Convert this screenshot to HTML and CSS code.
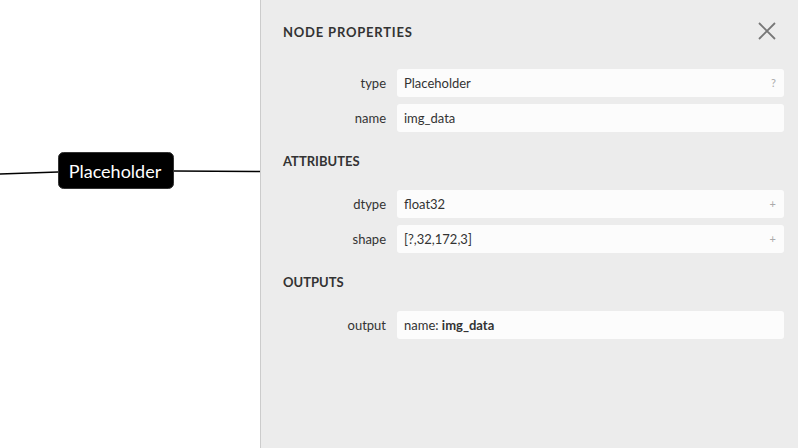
FILE: index.html
```html
<!DOCTYPE html>
<html lang="en">
<head>
  <meta charset="UTF-8" />
  <title>Node properties</title>
  <link rel="stylesheet" href="styles.css">
</head>
<body>

<div class="canvas">
  <svg class="graph" width="260" height="448" viewBox="0 0 260 448">
    <path class="edge" d="M0 174 L58 172" />
    <path class="edge" d="M174 171 L260 171.5" />
    <rect class="node" x="58.5" y="152.5" width="115" height="36" rx="5" ry="5" />
    <text class="node-label" x="115" y="177.5" text-anchor="middle">Placeholder</text>
  </svg>
</div>

<aside class="sidebar">
  <div class="sidebar-header">
    <h1>NODE PROPERTIES</h1>
    <svg class="close-btn" width="20" height="20" viewBox="0 0 20 20">
      <path d="M2 2 L18 18 M18 2 L2 18" />
    </svg>
  </div>

  <div class="props">
    <div class="prop-name">type</div>
    <div class="prop-value">Placeholder<span class="expander">?</span></div>
    <div class="prop-name">name</div>
    <div class="prop-value">img_data</div>
  </div>

  <h2>ATTRIBUTES</h2>
  <div class="props">
    <div class="prop-name">dtype</div>
    <div class="prop-value">float32<span class="expander">+</span></div>
    <div class="prop-name">shape</div>
    <div class="prop-value">[?,32,172,3]<span class="expander">+</span></div>
  </div>

  <h2>OUTPUTS</h2>
  <div class="props">
    <div class="prop-name">output</div>
    <div class="prop-value">name: <b>img_data</b></div>
  </div>
</aside>

</body>
</html>
```

FILE: styles.css
```css
/* Reset */
* {
  margin: 0; padding: 0; box-sizing: border-box;
}

body {
  display: flex;
  height: 448px;
  overflow: hidden;
  background: #fff;
  color: #333;
  font-family: Lato, 'Noto Sans', sans-serif;
  font-size: 13px;
}

/* Graph canvas */
.canvas {
  width: 260px;
  flex-shrink: 0;
  position: relative;
  background: #fff;
}

.graph {
  display: block;
}

.graph .edge {
  fill: none;
  stroke: #000;
  stroke-width: 1.5;
}

.graph .node {
  fill: #000;
  stroke: #333;
  stroke-width: 1;
}

.graph .node-label {
  fill: #fff;
  font-family: Lato, 'Noto Sans', sans-serif;
  font-size: 18px;
}

/* Sidebar */
.sidebar {
  flex: 1;
  background: #ececec;
  border-left: 1px solid #ccc;
  padding: 22px 14px 0 21px;
}

.sidebar-header {
  display: flex;
  justify-content: space-between;
  align-items: center;
  height: 20px;
  margin-bottom: 27px;
}

.sidebar-header h1 {
  font-size: 13px;
  font-weight: 700;
  letter-spacing: 0.8px;
  line-height: 20px;
  color: #333;
  margin-left: 1px;
}

.close-btn {
  margin-right: 7px;
  margin-top: -2px;
}

.close-btn path {
  stroke: #777;
  stroke-width: 1.8;
  fill: none;
}

.sidebar h2 {
  font-size: 13px;
  font-weight: 700;
  line-height: 20px;
  color: #333;
  margin: 19px 0 19px 1px;
}

/* Property rows */
.props {
  display: grid;
  grid-template-columns: 104px 1fr;
  column-gap: 11px;
  row-gap: 7px;
}

.prop-name {
  text-align: right;
  line-height: 28px;
  color: #333;
}

.prop-value {
  position: relative;
  height: 28px;
  line-height: 28px;
  padding: 0 7px;
  background: #fcfcfc;
  border-radius: 3px;
  color: #333;
}

.prop-value b {
  font-weight: 700;
}

.expander {
  position: absolute;
  right: 8px;
  top: 0;
  font-size: 11px;
  color: #aaa;
}
```
